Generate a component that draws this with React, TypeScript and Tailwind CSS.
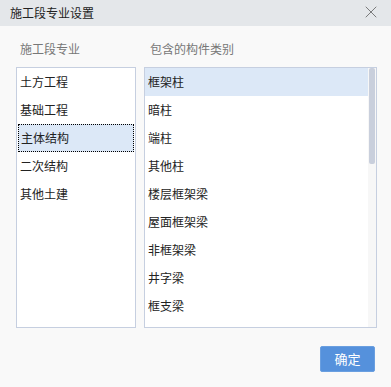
import { X } from "lucide-react"

const groups = ["土方工程", "基础工程", "主体结构", "二次结构", "其他土建"]

const parts = [
  "框架柱",
  "暗柱",
  "端柱",
  "其他柱",
  "楼层框架梁",
  "屋面框架梁",
  "非框架梁",
  "井字梁",
  "框支梁",
]

export default function App() {
  const activeGroup = 2
  const activePart = 0

  return (
    <div
      className="w-[391px] h-[387px] bg-[#f9f9f9] flex flex-col text-[12px] leading-[18px] text-[#222]"
      style={{ fontFamily: '"Noto Sans CJK SC", "Noto Sans", sans-serif' }}
    >
      {/* Title bar */}
      <div className="h-[26px] shrink-0 bg-[#e4e7ea] flex items-center justify-between pl-[10px] pr-[10px]">
        <span className="text-[12px] text-[#222]">施工段专业设置</span>
        <X size={20} strokeWidth={0.9} className="text-[#555] -mt-[2px]" />
      </div>

      {/* Lists */}
      <div className="flex gap-[8px] pl-[16px] pt-[14px]">
        <div className="w-[120px] flex flex-col">
          <div className="h-[18px] mb-[9px] pl-[4px] text-[#777]">施工段专业</div>
          <div className="h-[261px] border border-[#c6cfe0] bg-white">
            {groups.map((g, i) => (
              <div
                key={g}
                className={
                  i === activeGroup
                    ? "h-[28px] mx-px flex items-center pl-[2px] bg-[#dce8f7] border border-dotted border-black"
                    : "h-[28px] flex items-center pl-[3px]"
                }
              >
                {g}
              </div>
            ))}
          </div>
        </div>

        <div className="w-[233px] flex flex-col">
          <div className="h-[18px] mb-[9px] pl-[6px] text-[#777]">包含的构件类别</div>
          <div className="h-[261px] border border-[#c6cfe0] bg-white flex">
            <div className="flex-1">
              {parts.map((p, i) => (
                <div
                  key={p}
                  className={
                    i === activePart
                      ? "h-[28px] flex items-center pl-[3px] bg-[#dce8f7]"
                      : "h-[28px] flex items-center pl-[3px]"
                  }
                >
                  {p}
                </div>
              ))}
            </div>
            {/* Scrollbar */}
            <div className="w-[8px] bg-[#f7f7f7] pl-[1px] pr-[1px]">
              <div className="h-[96px] rounded-[2px] bg-[#c9cfdc]" />
            </div>
          </div>
        </div>
      </div>

      {/* Footer */}
      <div className="flex justify-end pr-[16px] mt-[18px]">
        <button className="w-[55px] h-[26px] rounded-[2px] bg-[#5591dc] border border-[#6a9fe0] text-white text-[13px] flex items-center justify-center">
          确定
        </button>
      </div>
    </div>
  )
}
